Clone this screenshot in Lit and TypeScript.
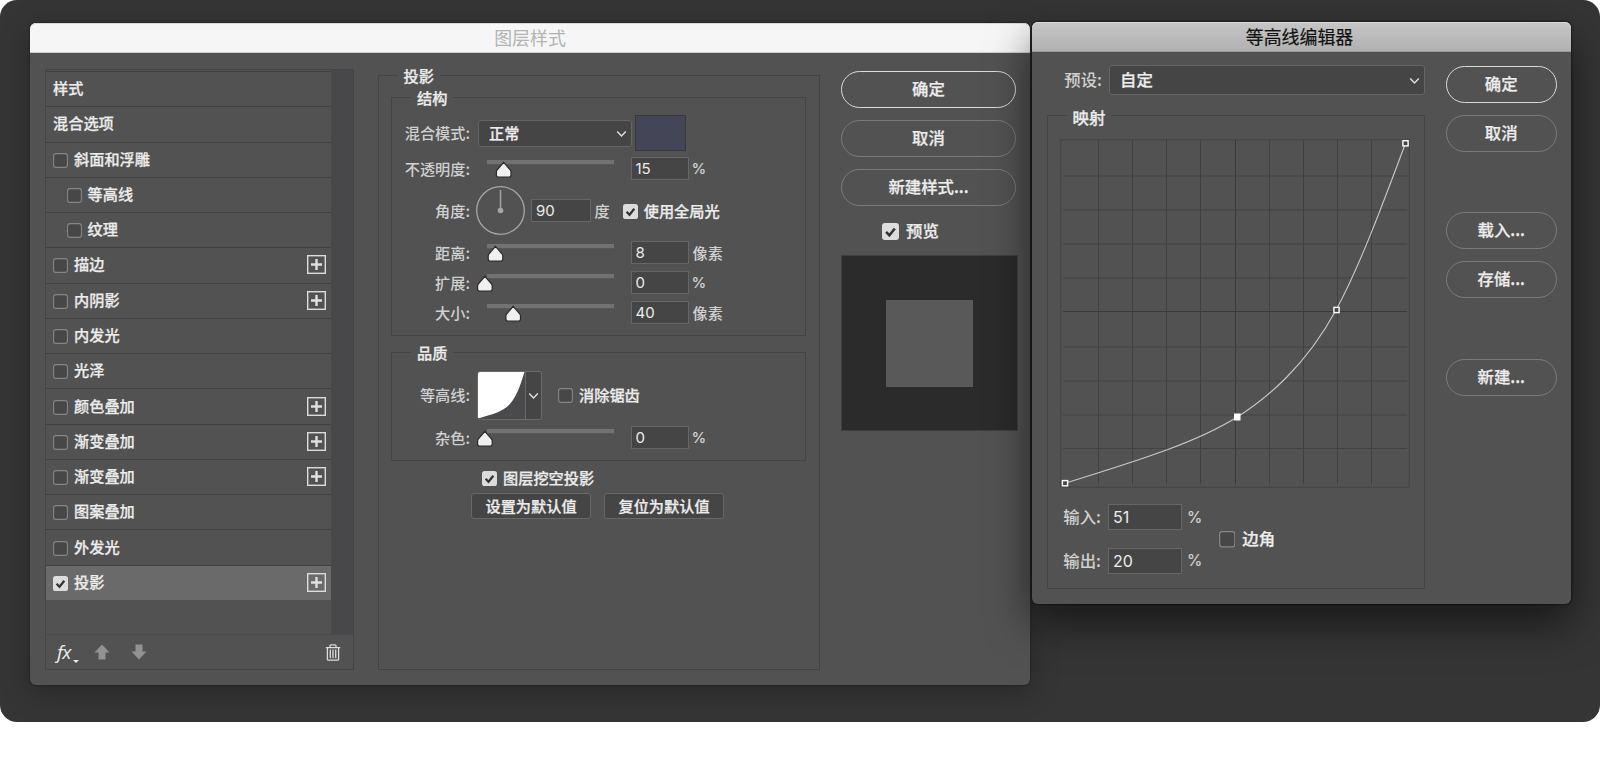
import { LitElement, html, css, svg } from "lit";
import { customElement, property } from "lit/decorators.js";

type Pt = [number, number];

interface StyleRow {
  label: string;
  box?: boolean;
  indent?: boolean;
  checked?: boolean;
  plus?: boolean;
}

const STYLES: StyleRow[] = [
  { label: "样式" },
  { label: "混合选项" },
  { label: "斜面和浮雕", box: true },
  { label: "等高线", box: true, indent: true },
  { label: "纹理", box: true, indent: true },
  { label: "描边", box: true, plus: true },
  { label: "内阴影", box: true, plus: true },
  { label: "内发光", box: true },
  { label: "光泽", box: true },
  { label: "颜色叠加", box: true, plus: true },
  { label: "渐变叠加", box: true, plus: true },
  { label: "渐变叠加", box: true, plus: true },
  { label: "图案叠加", box: true },
  { label: "外发光", box: true },
  { label: "投影", box: true, plus: true, checked: true },
];

// Natural cubic spline through the points, as an SVG path of Bezier segments.
function spline(p: Pt[]): string {
  const n = p.length;
  const m: number[] = new Array(n).fill(0);
  const c: number[] = new Array(n).fill(0);
  const d: number[] = new Array(n).fill(0);
  for (let i = 1; i < n - 1; i++) {
    const h0 = p[i][0] - p[i - 1][0];
    const h1 = p[i + 1][0] - p[i][0];
    const r = 6 * ((p[i + 1][1] - p[i][1]) / h1 - (p[i][1] - p[i - 1][1]) / h0);
    const w = 2 * (h0 + h1) - h0 * c[i - 1];
    c[i] = h1 / w;
    d[i] = (r - h0 * d[i - 1]) / w;
  }
  for (let i = n - 2; i > 0; i--) m[i] = d[i] - c[i] * m[i + 1];
  let path = `M${p[0][0]} ${p[0][1]}`;
  for (let i = 0; i < n - 1; i++) {
    const [x0, y0] = p[i];
    const [x1, y1] = p[i + 1];
    const h = x1 - x0;
    const s = (y1 - y0) / h;
    const s0 = s - (h * (2 * m[i] + m[i + 1])) / 6;
    const s1 = s + (h * (m[i] + 2 * m[i + 1])) / 6;
    path += `C${x0 + h / 3} ${y0 + (s0 * h) / 3} ${x1 - h / 3} ${y1 - (s1 * h) / 3} ${x1} ${y1}`;
  }
  return path;
}

const CURVE: Pt[] = [
  [5, 344.2], [106.5, 311], [177.2, 278], [226.4, 238.5], [276.3, 170.5], [345.5, 4.3],
];
const GRID_X = [38.5, 72.5, 106.5, 140.5, 175.5, 209.5, 243.5, 277.5, 311.5];
const GRID_Y = [37, 71, 105, 139, 172.5, 208, 242, 276, 309.5];

@customElement("ps-check")
export class PsCheck extends LitElement {
  @property({ type: Boolean }) checked = false;
  @property({ type: Number }) size = 15;
  static styles = css`
    :host { display: block; flex: none; line-height: 0; }
    svg { display: block; }
  `;
  render() {
    return html`<svg width=${this.size} height=${this.size} viewBox="0 0 15 15">
      ${this.checked
        ? svg`<rect width="15" height="15" rx="2.6" fill="#dcdcdc"></rect>
            <path d="M3.6 7.8 6.5 10.8 11.3 4.8" fill="none" stroke="#333" stroke-width="2.2"></path>`
        : svg`<rect x=".6" y=".6" width="13.8" height="13.8" rx="2.4" fill="#474747" stroke="#868686" stroke-width="1.1"></rect>`}
    </svg>`;
  }
}

@customElement("ps-slider")
export class PsSlider extends LitElement {
  @property({ type: Number }) value = 0;
  static styles = css`
    :host { display: block; flex: none; }
    svg { display: block; }
  `;
  render() {
    return html`<svg width="138" height="24" viewBox="0 0 138 24">
      <rect x="10" y="3" width="127" height="4.2" fill="#727272"></rect>
      <path transform="translate(${this.value} 0)"
        d="M7.9 5.300 14.6 13.2Q15.2 14 15.2 15V18Q15.2 20.2 13 20.2H2.8Q.6 20.2 .6 18V15Q.6 14 1.2 13.2Z"
        fill="#f0f0f0" stroke="#2a2a2a" stroke-width="1.2"></path>
    </svg>`;
  }
}

@customElement("app-root")
export class AppRoot extends LitElement {
  static styles = css`
    :host {
      display: block;
      width: 1600px;
      height: 762px;
      background: #fff;
      font-family: "Noto Sans CJK SC", sans-serif;
      font-size: 15.2px;
      font-weight: 500;
      color: #ececec;
      -webkit-text-stroke: .25px;
    }
    * { box-sizing: border-box; }
    svg { display: block; flex: none; }
    .stage {
      display: flex;
      align-items: flex-start;
      height: 722px;
      padding: 22px 0 0 30px;
      border-radius: 17px;
      background: #353535;
      overflow: hidden;
    }
    .dialog { display: flex; flex-direction: column; flex: none; border-radius: 6px; background: #525252; }
    .d1 {
      width: 1000px; height: 662px; margin-top: 1px;
      box-shadow: 0 0 2px rgba(0,0,0,.5), 0 6px 30px rgba(0,0,0,.28);
    }
    .d2 {
      width: 539px; height: 582px; margin-left: 2px;
      box-shadow: 0 0 2px 1px rgba(0,0,0,.4), 0 18px 44px rgba(0,0,0,.58);
    }
    .title {
      flex: none; height: 30px; line-height: 29px; text-align: center; -webkit-text-stroke: 0;
      font-size: 17.9px; font-weight: 400; border-radius: 6px 6px 0 0;
    }
    .d1 .title { color: #b3b3b3; background: #f6f6f6; border-bottom: 1px solid #cfcfcf; box-shadow: inset 0 1px #d8d8d8; }
    .d2 .title { color: #111; background: linear-gradient(#c6c6c6, #b1b1b1); border-bottom: 1px solid #989898; box-shadow: inset 0 1px #dadada; padding-right: 4px; -webkit-text-stroke: .2px; }
    .body { display: flex; flex: 1; align-items: flex-start; }

    .list { width: 309px; height: 601px; margin: 16px 0 0 15px; border: 1px solid #454545; display: flex; flex-direction: column; }
    .upper { display: flex; height: 564px; }
    .rows { width: 285px; padding-top: 1px; }
    .row { display: flex; align-items: center; height: 35.27px; padding: 0 5px 0 7px; border-top: 1.4px solid #414141; }
    .row.indent { padding-left: 20.5px; }
    .row.on { background: #6a6a6a; }
    .row span { flex: 1; line-height: 22px; padding-bottom: 4px; }
    .row ps-check { margin: 1px 6px 0 0; }
    .row svg { margin-bottom: 1px; }
    .track { flex: 1; background: #48484a; }
    .foot { display: flex; align-items: center; flex: 1; border-top: 1px solid #4a4a4a; padding: 0 12px 0 11px; }
    .fx { font: italic 400 19px/24px "Open Sans", sans-serif; width: 17px; letter-spacing: -.6px; padding-bottom: 1px; -webkit-text-stroke: 0; }
    .tri { margin: 18px 15px 0 -1px; }
    .down { margin-left: 21px; }
    .trash { margin-left: auto; }

    fieldset { margin: 0; min-width: 0; padding: 0; border: 1px solid #444; }
    legend { height: 21px; line-height: 20px; margin-left: 19px; padding: 0 6px; }
    .main { width: 442px; height: 605px; margin: 12px 0 0 24px; }
    .main > legend { margin-left: 18.5px; }
    .inner { width: 415px; margin: 1px 0 0 12px; }
    .struct { height: 249px; }
    .quality { height: 119px; margin-top: 6px; }
    .f { display: flex; align-items: center; height: 35px; }
    .h36 { height: 36px; margin-top: 7px; }
    .h49 { height: 49px; }
    .h25 { height: 25px; }
    .h60 { height: 60px; margin-top: 2px; }
    .lab { width: 78px; flex: none; text-align: right; color: #d0d0d0; line-height: 22px; padding-bottom: 2px; -webkit-text-stroke: 0; }
    .sel {
      display: flex; align-items: center; justify-content: space-between;
      border: 1px solid #656565; border-radius: 3px; background: #454545;
    }
    .sel span { padding-bottom: 2px; line-height: 22px; }
    .sel svg { margin-top: 2px; }
    .mode { width: 154px; height: 27px; margin-left: 8px; padding: 0 4px 0 10px; }
    .swatch { width: 51px; height: 36px; margin-left: 2.5px; background: #444657; border: 1.5px solid #383838; }
    ps-slider { margin: 0 16px 0 7px; }
    .inp {
      width: 58px; height: 23px; flex: none; border: 1px solid #666; background: #454545; padding-left: 4px;
      font: 400 15px/21px Inter, sans-serif; color: #ececec; -webkit-text-stroke: 0;
    }
    .slide .inp { padding-left: 3.5px; }
    .wide { width: 60px; margin-left: 6px; }
    .unit { margin-left: 3.5px; color: #d0d0d0; line-height: 22px; padding-bottom: 2px; -webkit-text-stroke: 0; }
    .pct { font: 400 15px/22px Inter, sans-serif; margin: 0 0 0 2.5px; padding: 1px 0 0; -webkit-text-stroke: .2px; }
    .dial { margin-left: 6px; }
    .chk { display: flex; align-items: center; gap: 6px; line-height: 22px; }
    .chk span { padding-bottom: 2px; }
    .chk ps-check { margin-top: 1px; }
    .glob { margin-left: 13px; }
    .contour { display: flex; width: 65px; height: 49px; margin: 0 16px 0 7px; border: 1px solid #6a6a6a; border-radius: 3px; background: #454545; overflow: hidden; }
    .drop { flex: 1; border-left: 1px solid #6a6a6a; display: flex; align-items: center; justify-content: center; padding-top: 1px; }
    .knock { margin: 4px 0 0 103px; height: 26px; }
    .btns { display: flex; gap: 13px; margin: 2px 0 0 92px; }
    .btn { width: 120px; height: 25.5px; border: 1px solid #676767; border-radius: 3px; background: #454545; text-align: center; line-height: 22px; }

    .side { margin: 18px 0 0 21px; width: 175px; font-size: 16.4px; }
    .pill { height: 37px; border: 1.3px solid #7b7b7b; border-radius: 19px; text-align: center; line-height: 32.500px; margin-bottom: 12px; }
    .pill.def { border-color: #dadada; }
    .prev { margin: 13px 0 0 41px; height: 24px; gap: 7px; }
    .prevbox { width: 177px; height: 176px; margin: 12px 0 0 0; border: 1.5px solid #3e3e3e; background: #2b2b2c; display: flex; align-items: center; justify-content: center; }
    .sq { width: 87px; height: 87px; background: #595959; }

    .d2 { font-size: 16.4px; }
    .left2 { width: 378px; margin-left: 15px; }
    .preset { display: flex; align-items: center; margin: 13px 0 0 17px; height: 30px; }
    .preset .lab, .pair .lab { width: 38px; }
    .preset .sel { width: 316px; height: 30px; margin-left: 7px; padding: 0 4px 0 10px; }
    .map { width: 378px; height: 484px; margin-top: 10px; }
    .map legend { padding: 2px 6px 0; line-height: 21.500px; margin-left: 18.5px; }
    .graph { margin: 13px 0 0 12px; }
    .io { display: flex; align-items: center; margin: 16px 0 0 15px; }
    .pair { display: flex; align-items: center; height: 26px; }
    .pair + .pair { margin-top: 17.500px; }
    .pair .inp { width: 74px; height: 26px; margin: 0 5px 0 7px; font-size: 16px; line-height: 24px; }
    .pair .pct { font-size: 15.6px; margin: 0; }
    .corner { margin: 0 0 0 16.500px; gap: 7px; }
    .side2 { width: 110.500px; margin: 14px 0 0 21px; }
    .g1 { margin-top: 60px; }
    .g2 { margin-top: 61px; }
  `;

  private chevron() {
    return html`<svg width="11" height="8" viewBox="0 0 11 8"><path d="M1.2 1.6 5.5 6 9.8 1.6" fill="none" stroke="#dedede" stroke-width="1.5"></path></svg>`;
  }

  private row(r: StyleRow) {
    return html`<div class="row ${r.indent ? "indent" : ""} ${r.checked ? "on" : ""}">
      ${r.box ? html`<ps-check ?checked=${!!r.checked}></ps-check>` : ""}
      <span>${r.label}</span>
      ${r.plus
        ? html`<svg width="19" height="19" viewBox="0 0 19 19"><rect x=".7" y=".7" width="17.6" height="17.6" fill="none" stroke="#dcdcdc" stroke-width="1.4"></rect><path d="M9.5 4V15M4 9.5H15" stroke="#e0e0e0" stroke-width="2.4"></path></svg>`
        : ""}
    </div>`;
  }

  private slide(label: string, pos: number, value: string, unit: string, cls = "") {
    return html`<div class="f slide ${cls}">
      <div class="lab">${label}:</div>
      <ps-slider .value=${pos}></ps-slider>
      <div class="inp">${value}</div>
      <div class="unit ${unit === "%" ? "pct" : ""}">${unit}</div>
    </div>`;
  }

  private layerStyle() {
    return html`<section class="dialog d1">
      <div class="title">图层样式</div>
      <div class="body">
        <div class="list">
          <div class="upper">
            <div class="rows">${STYLES.map((r) => this.row(r))}</div>
            <div class="track"></div>
          </div>
          <div class="foot">
            <div class="fx">fx</div>
            <svg class="tri" width="6" height="3" viewBox="0 0 6 3"><path d="M0 0H6L3 3Z" fill="#ececec"></path></svg>
            <svg width="16" height="16" viewBox="0 0 16 16"><path d="M8 .5 15.5 8.5H11.5V15.5H4.5V8.5H.5Z" fill="#929292"></path></svg>
            <svg class="down" width="16" height="16" viewBox="0 0 16 16"><path d="M8 15.5 .5 7.5H4.5V.5H11.5V7.5H15.5Z" fill="#929292"></path></svg>
            <svg class="trash" width="16" height="17" viewBox="0 0 16 17" fill="none" stroke="#dcdcdc" stroke-width="1.3">
              <path d="M.8 3.6H15.2M5 3.4V2Q5 .9 6 .9H10Q11 .9 11 2V3.4M2.4 3.8V15.2Q2.4 16.2 3.4 16.2H12.6Q13.6 16.2 13.6 15.2V3.8M5.3 5.6V14.3M8 5.6V14.3M10.7 5.6V14.3"></path>
            </svg>
          </div>
        </div>

        <fieldset class="main">
          <legend>投影</legend>
          <fieldset class="inner struct">
            <legend>结构</legend>
            <div class="f h36">
              <div class="lab">混合模式:</div>
              <div class="sel mode"><span>正常</span>${this.chevron()}</div>
              <div class="swatch"></div>
            </div>
            ${this.slide("不透明度", 18.8, "15", "%")}
            <div class="f h49">
              <div class="lab">角度:</div>
              <svg class="dial" width="49" height="49" viewBox="0 0 49 49">
                <circle cx="24.5" cy="24.5" r="23.8" fill="none" stroke="#a6a6a6" stroke-width="1.3"></circle>
                <path d="M24.5 4V24.5" stroke="#a0a0a0" stroke-width="1.6"></path>
                <circle cx="24.5" cy="24.5" r="2.8" fill="#a6a6a6"></circle>
              </svg>
              <div class="inp wide">90</div>
              <div class="unit">度</div>
              <div class="chk glob"><ps-check checked></ps-check><span>使用全局光</span></div>
            </div>
            ${this.slide("距离", 10.6, "8", "像素")}
            ${this.slide("扩展", 0, "0", "%", "h25")}
            ${this.slide("大小", 28.3, "40", "像素")}
          </fieldset>
          <fieldset class="inner quality">
            <legend>品质</legend>
            <div class="f h60">
              <div class="lab">等高线:</div>
              <div class="contour">
                <svg width="47" height="47" viewBox="0 0 47 47"><rect width="47" height="47" fill="#4a4a4d"></rect><path d="M0 0H46.5C42 14 38.500 25 31.500 32.500C25 39.500 14 42.500 0 46.500Z" fill="#fff"></path></svg>
                <div class="drop">${this.chevron()}</div>
              </div>
              <div class="chk"><ps-check></ps-check><span>消除锯齿</span></div>
            </div>
            ${this.slide("杂色", 0, "0", "%", "h25")}
          </fieldset>
          <div class="chk knock"><ps-check checked></ps-check><span>图层挖空投影</span></div>
          <div class="btns"><div class="btn">设置为默认值</div><div class="btn">复位为默认值</div></div>
        </fieldset>

        <div class="side">
          <div class="pill def">确定</div>
          <div class="pill">取消</div>
          <div class="pill">新建样式...</div>
          <div class="chk prev"><ps-check checked .size=${17}></ps-check><span>预览</span></div>
          <div class="prevbox"><div class="sq"></div></div>
        </div>
      </div>
    </section>`;
  }

  private graph() {
    const pts: Pt[] = [CURVE[0], [276.5, 171], CURVE[CURVE.length - 1]];
    return html`<svg class="graph" width="350" height="349" viewBox="0 0 350 349" fill="none">
      <rect x=".75" y=".75" width="348.5" height="347.5" stroke="#464646" stroke-width="1.3"></rect>
      ${GRID_X.map((x, i) => svg`<path d="M${x} 1V345.500" stroke=${i === 4 ? "#393939" : "#404040"}></path>`)}
      ${GRID_Y.map((y, i) => svg`<path d="M3 ${y}H347" stroke=${i === 4 ? "#393939" : "#434343"}></path>`)}
      <path d=${spline(CURVE)} stroke="#c9c9c9" stroke-width="1.1"></path>
      ${pts.map(([x, y]) => svg`<rect x=${x - 2.6} y=${y - 2.6} width="5.200" height="5.200" fill="#454545" stroke="#fff" stroke-width="1.400"></rect>`)}
      <rect x="174" y="274.500" width="6.500" height="7" fill="#fff"></rect>
    </svg>`;
  }

  private contourEditor() {
    return html`<section class="dialog d2">
      <div class="title">等高线编辑器</div>
      <div class="body">
        <div class="left2">
          <div class="preset">
            <div class="lab">预设:</div>
            <div class="sel"><span>自定</span>${this.chevron()}</div>
          </div>
          <fieldset class="map">
            <legend>映射</legend>
            ${this.graph()}
            <div class="io">
              <div>
                <div class="pair"><div class="lab">输入:</div><div class="inp">51</div><div class="unit pct">%</div></div>
                <div class="pair"><div class="lab">输出:</div><div class="inp">20</div><div class="unit pct">%</div></div>
              </div>
              <div class="chk corner"><ps-check .size=${16.5}></ps-check><span>边角</span></div>
            </div>
          </fieldset>
        </div>
        <div class="side2">
          <div class="pill def">确定</div>
          <div class="pill">取消</div>
          <div class="pill g1">载入...</div>
          <div class="pill">存储...</div>
          <div class="pill g2">新建...</div>
        </div>
      </div>
    </section>`;
  }

  render() {
    return html`<div class="stage">${this.layerStyle()}${this.contourEditor()}</div>`;
  }
}
